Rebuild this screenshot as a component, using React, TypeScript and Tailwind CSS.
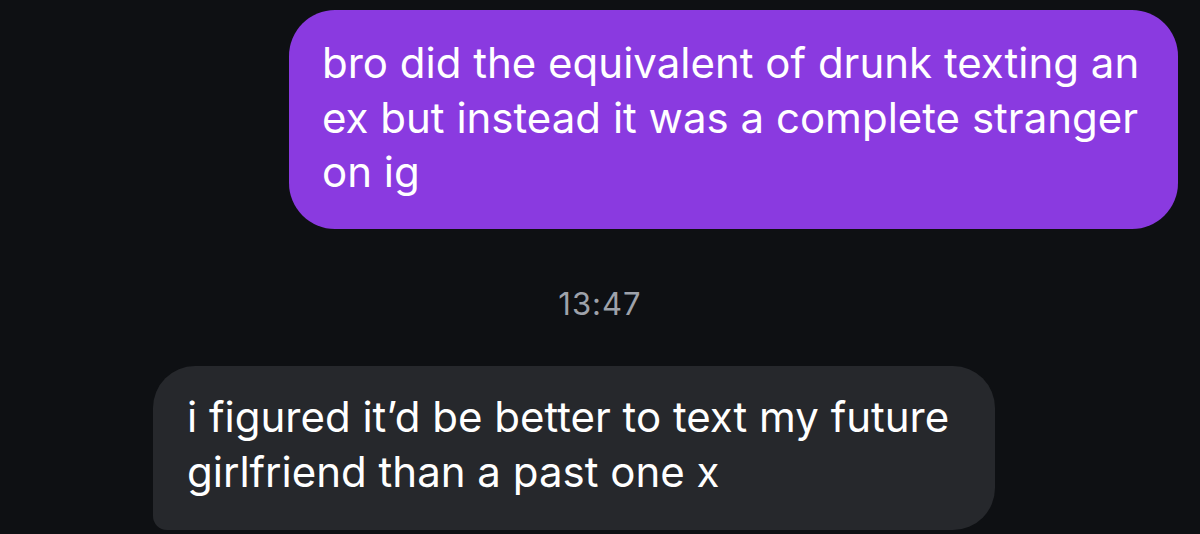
export default function App() {
  return (
    <div
      className="w-[1200px] h-[534px] overflow-hidden bg-[#0e1013] flex flex-col"
      style={{ fontFamily: 'Inter, "Liberation Sans", sans-serif' }}
    >
      {/* outgoing message */}
      <div className="self-end mt-[10px] mr-[22px] w-[889px] rounded-[46px] bg-[#8a3ae0] pl-[33px] pr-[20px] pt-[26px] pb-[29px]">
        <p className="text-[42px] leading-[54.5px] text-white whitespace-nowrap">
          bro did the equivalent of drunk texting an
          <br />
          ex but instead it was a complete stranger
          <br />
          on ig
        </p>
      </div>

      {/* timestamp */}
      <div className="mt-[57px] text-center text-[31px] leading-[36px] tracking-[1px] text-[#9ea2aa]">13:47</div>

      {/* incoming message */}
      <div className="ml-[153px] mt-[44px] w-[842px] rounded-[42px] rounded-bl-[14px] bg-[#26282c] pl-[34px] pr-[20px] pt-[23px] pb-[31px]">
        <p className="text-[42px] leading-[55px] text-white whitespace-nowrap">
          i figured it’d be better to text my future
          <br />
          girlfriend than a past one x
        </p>
      </div>
    </div>
  );
}
